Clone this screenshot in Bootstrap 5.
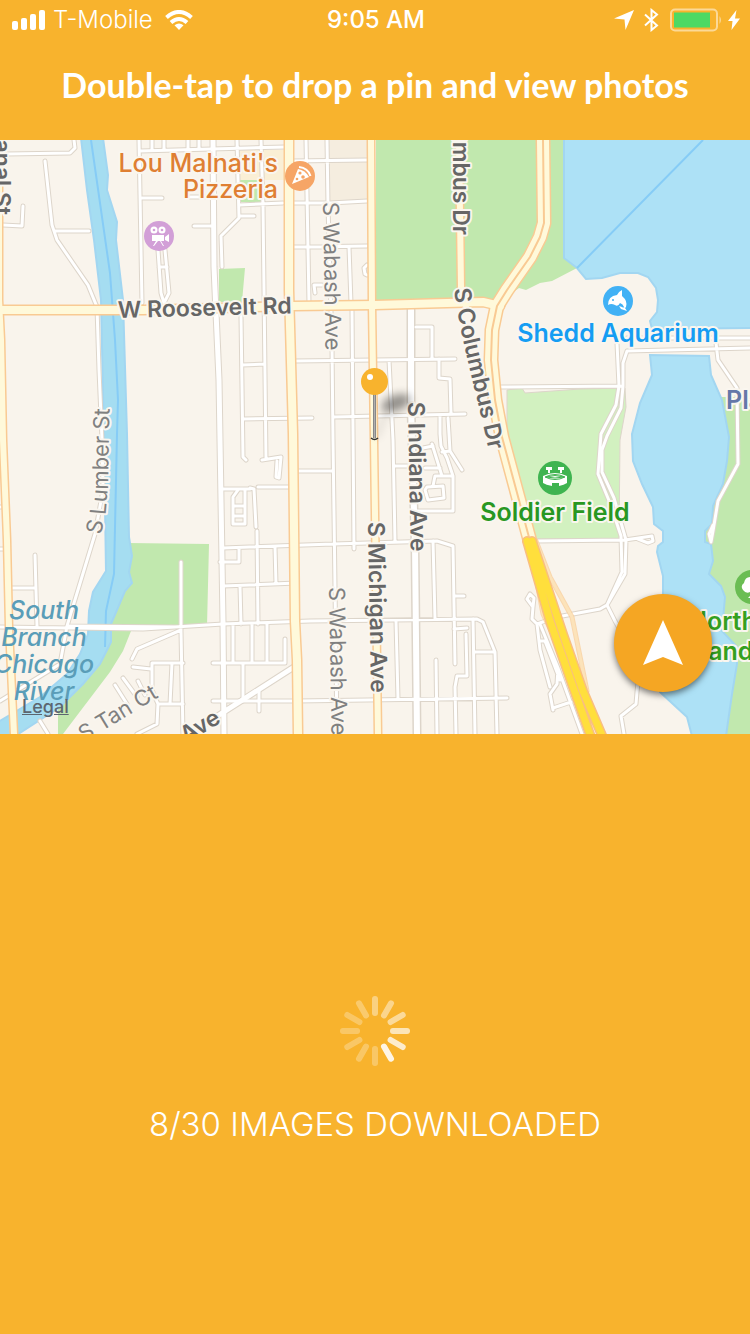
<!DOCTYPE html>
<html lang="en">
<head>
<meta charset="utf-8">
<meta name="viewport" content="width=device-width, initial-scale=1">
<title>Photo map</title>
<link rel="stylesheet" href="https://cdn.jsdelivr.net/npm/bootstrap@5.3.0/dist/css/bootstrap.min.css">
<script src="https://cdn.jsdelivr.net/npm/bootstrap@5.3.0/dist/js/bootstrap.bundle.min.js"></script>
<style>
  body { background: #f8b32d; color: #fff; font-family: Inter, "Liberation Sans", sans-serif; }
  .status-bar { height: 40px; padding: 0 10px 0 12px; font-size: 24px; line-height: 40px; }
  .status-side { flex: 1 1 0; }
  .carrier { font-weight: 300; margin-left: 8px; margin-right: 12px; }
  .clock { font-weight: 500; }
  .hint { height: 100px; padding-bottom: 10px; font: 700 34px/40px Lato, sans-serif; }
  .map-canvas { display: block; width: 100%; height: auto; background: #f9f4ec; }
  .locate { right: 38px; bottom: 42px; width: 98px; height: 98px; background: #f5a623; box-shadow: 0 3px 6px rgba(0,0,0,.5); }
  .legal { left: 22px; bottom: 16px; font-size: 18px; line-height: 22px; font-weight: 500; color: #5c6670; }
  .progress-pane { padding-top: 262px; }
  .progress-text { margin-top: 36px; font-size: 33px; line-height: 44px; font-weight: 300; }

  .casing, .paving { fill: none; stroke-linecap: round; stroke-linejoin: round; }
  .casing { stroke: #ddd5ca; }
  .paving { stroke: #fff; }
  .main.casing { stroke: #f9ca93; }
  .main.paving { stroke: #fff9da; }
  .express.casing { stroke: #f9bf80; }
  .express.paving { stroke: #ffdf3c; }
  .water { fill: #ade1f6; stroke: #a2d6f1; stroke-width: 2; }
  .channel { fill: none; stroke: #86ccf6; stroke-width: 2; }
  .park { fill: #c1e8ae; }
  .map-canvas text { font-family: Inter, "Liberation Sans", sans-serif; font-size: 25px; paint-order: stroke; stroke: #faf6ef; stroke-width: 4px; stroke-linejoin: round; }
  .map-canvas .avenue { fill: #666; font-size: 23px; font-weight: 600; }
  .map-canvas .street { fill: #808080; font-size: 22px; font-weight: 400; }
  .place { font-weight: 600; }
  .eatery { font-weight: 500; }
  .river-name { fill: #5a9db8; font-weight: 500; font-style: italic; }
  .map-canvas .river-name { stroke: none; }
</style>
</head>
<body class="d-flex flex-column min-vh-100">

<header>
  <div class="status-bar d-flex align-items-center">
    <div class="status-side d-flex align-items-center">
      <svg width="33" height="20" viewBox="0 0 33 20" fill="#fff" aria-hidden="true"><rect y="11" width="6" height="9" rx="2"/><rect x="9" y="8" width="6" height="12" rx="2"/><rect x="18" y="4" width="6" height="16" rx="2"/><rect x="27" width="6" height="20" rx="2"/></svg>
      <span class="carrier">T-Mobile</span>
      <svg width="28" height="20" viewBox="0 0 28 20" aria-hidden="true"><g fill="none" stroke="#fff" stroke-width="4"><path d="M1.500 7.500Q14-3.500 26.500 7.500"/><path d="M6 12.500Q14 5.500 22 12.500"/></g><path d="M14 20l-4.500-4.700q4.500-3.500 9 0z" fill="#fff"/></svg>
    </div>
    <span class="clock">9:05 AM</span>
    <div class="status-side d-flex align-items-center justify-content-end">
      <svg width="20" height="20" viewBox="0 0 20 20" fill="#fff" aria-hidden="true"><path d="M20 0L11.500 20 10.500 9.500 0 8.500z"/></svg>
      <svg class="ms-2 me-2" width="20" height="24" viewBox="0 0 20 24" fill="none" stroke="#fff" stroke-width="2" aria-hidden="true"><path d="M3 6.500L15 17.500 9.500 22V2L15 6.500 3 17.500"/></svg>
      <svg width="53" height="24" viewBox="0 0 53 24" aria-hidden="true"><rect x="1" y="1.500" width="46" height="21" rx="4" fill="none" stroke="#fff" stroke-opacity=".5" stroke-width="2"/><rect x="4" y="4.500" width="36" height="15" fill="#4cd964"/><path d="M49.500 8q3 4 0 8z" fill="#fff" fill-opacity=".5"/></svg>
      <svg class="ms-1" width="13" height="20" viewBox="0 0 13 20" fill="#fff" aria-hidden="true"><path d="M9.500 0L1 11h4.500L4.500 20 13 8.500H8z"/></svg>
    </div>
  </div>
  <h1 class="hint m-0 d-flex align-items-center justify-content-center text-center">Double-tap to drop a pin and view photos</h1>
</header>

<main class="flex-grow-1 d-flex flex-column">
  <section class="position-relative" aria-label="Map">
    <svg class="map-canvas" viewBox="0 140 750 594" role="img" aria-label="Street map of the South Loop, Chicago">
      <defs>
        <path id="minor" d="M7 154L70 153 75 148 74 140M45 161L52 225 57 240 88 285 97 307 99 370 102 440 103 490 95 534 67 626 60 664 0 701M54 231H89M3 225L22 226 23 206M139 140L142 303M140 151L285 147M152 140V150M164 140V150M188 140V149M199 140V149M237 140L239 218 221 236 222 267M142 198H162M194 226H213M190 197H213M239 205L283 203M240 216H254M158 250L161 293 164 303 169 293 165 250M159 267H167M241 316L243 457 246 460M242 365L265 364M243 419L312 418M261 140L263 205 266 459M262 460L281 457 279 478 276 477 277 461M306 140L309 303M327 140L328 205 332 347 333 440 335 587 337 734M293 161L367 160M293 203L330 203 367 201M293 247L367 246M349 247L351 303M352 310L354 549M367 265L364 268 365 274 367 275M315 293L314 285 322 285M295 361L455 359M333 417L465 414M389 360L393 440 395 541M416 327H432V358M439 359V378L450 379 451 413M440 415V434L441 446 447 458 453 476M448 418L449 434 450 451 462 470M442 452L450 451M298 471H332M258 487H290M250 488L254 489 256 527M257 531L258 624M223 548L333 544 437 541 453 546 455 664M395 466H408M425 468H440M423 448L433 446M432 444L442 476M433 541L435 619M275 547L276 584M223 586L297 583M0 627L143 629 223 624 310 621 477 619 483 622 495 652 497 734M70 626L181 627M473 619L475 734M475 652H493M396 621L398 699M213 701L297 701 507 698M454 629L467 628M466 634L467 676H457L455 687 456 734M436 660L437 734M454 596H464M417 511H453V476H435L433 486M427 487L443 486 444 498 428 500 425 490zM252 624V663M267 624V663M213 663H285V639M259 691V711M238 490L233 497V524H245V490M233 506H245M233 516H245M222 489H250M220 562H239V548M240 586L241 624M233 624V663M243 663V701M181 562V631L183 734M181 630L137 649 132 659M133 667L151 669M183 663H152V690L158 704H183M158 704L157 724 137 734M172 663L170 704M115 685L127 704M123 678L137 697M138 681L145 695M35 555L37 626M10 588H36M40 721L48 734M0 469H4M0 507H5M0 549H6M627 351L750 348M627 338H750M500 387L623 386M617 343L619 386 616 405 601 434 598 474 610 503 621 536 622 572 607 605M627 351L623 363 623 386 621 408 607 436 602 450 602 472 614 498 626 540 625 574 607 605M716 343L718 360 737 388 738 464 718 501 713 531 711 542 709 534 713 525M536 541L625 540 652 536 653 541 648 543 638 539M537 624L557 617 600 609 607 605 615 621 640 665 637 692 636 704 621 716 624 734M537 624L532 619 533 607 527 599 530 594 534 598 533 607M537 624L540 650 550 687M540 624L558 668 582 734M558 668L557 684 550 694 553 710M553 708L571 702M540 641H545L560 680"/>
        <path id="collector" d="M213 140L214 267 219 380 220 440 223 621 224 734M294 667L205 724"/>
        <path id="indiana" d="M411 310V407L415 544 417 734"/>
        <path id="arterial" d="M-1 140V300L1 340 3 440 7 540 9 627 14 734M371 140L372 305 374 440 378 734M459 140L461 287 466 306"/>
        <path id="arterial-wide" d="M0 310H143L293 306 375 305 483 302 500 306M289 140V290L293 434 295 621 297 660 298 734"/>
        <path id="shore-drive" d="M543 140L544 223 540 237 530 257 507 290 497 306 492 330 491 360 495 400 502 437 530 541"/>
        <path id="highway" d="M527 541L550 621 572 684 592 740M532 541L563 634 583 691 604 740"/>
        <path id="ramps" d="M530 545L543 614 567 664 575 690M536 541L550 577 572 617 587 691"/>
        <path id="columbus-line" d="M454 289L457 310 463 340 474 387 482 420 493 470"/>
        <path id="lumber-line" d="M101 535L106 510 108 487 109 434 110 390"/>
        <filter id="soft" x="-50%" y="-50%" width="200%" height="200%"><feGaussianBlur stdDeviation="4"/></filter>
      </defs>

      <!-- land use -->
      <path fill="#f5eddf" d="M329 140H368V201H329z"/>
      <path fill="#faefd5" d="M237 150H286V180H237z"/>
      <path class="park" d="M240 180H262V202H240zM219 269L245 268 242 302H219zM376 140H564V258L577 268 552 281 540 283 526 290 519 288 498 303 376 301zM128 543L209 544 207 626H133L123 651 110 672 63 734H58V700L100 630zM720 397H750V734H715L705 520z"/>
      <path fill="#d2f1c0" stroke="#ddd5ca" d="M507 390L522 388 525 393 580 389 625 388 626 407 620 440 619 539H535L507 434z"/>

      <!-- water -->
      <path class="water" d="M564 138V258L577 268 586 279 602 278 620 273H638L648 277 656 288 658 300 657 312 650 321 652 329 752 328V138z"/>
      <path class="water" d="M650 355L709 356 711 375 722 400 729 437 727 461 723 484 713 506 712 524 705 531V542L711 544 713 561 709 574 721 586 725 597 722 631 737 647V664L732 694 726 736H692L687 717 660 692 663 647V576L657 552 658 546 663 542V531L654 524 653 507 642 484 633 461 632 434 640 403 652 375z"/>
      <path class="water" style="fill:#a5ddf1" d="M81 138L87 190 94 240 101 300 104 440 106 571 93 592 89 611 88 634 80 654 67 674 40 697-2 722V738H12L60 707 83 684 100 664 111 642V624L125 591 132 583 129 572 132 556 129 537 127 434 123 300 116 240 117 222 107 190 108 175 103 138z"/>
      <path class="channel" d="M91 140L110 273 115 340 118 400 117 434 114 574 106 611 105 647M703 140L577 268"/>

      <!-- streets: casings first, then surfaces -->
      <use href="#minor" class="casing" stroke-width="5"/>
      <use href="#collector" class="casing" stroke-width="7"/>
      <use href="#indiana" class="casing" stroke-width="9"/>
      <use href="#minor" class="paving" stroke-width="3"/>
      <use href="#collector" class="paving" stroke-width="5"/>
      <use href="#indiana" class="paving" stroke-width="6"/>
      <use href="#ramps" class="main casing" stroke-width="5" opacity=".7"/>
      <use href="#ramps" class="paving" style="stroke:#fce3ba" stroke-width="3"/>
      <use href="#arterial" class="main casing" stroke-width="9"/>
      <use href="#arterial-wide" class="main casing" stroke-width="11"/>
      <use href="#shore-drive" class="main casing" stroke-width="15"/>
      <use href="#arterial" class="main paving" stroke-width="6"/>
      <use href="#arterial-wide" class="main paving" stroke-width="8"/>
      <use href="#shore-drive" class="main paving" stroke-width="12"/>
      <use href="#shore-drive" class="main casing" stroke-width="2"/>
      <use href="#highway" class="express casing" stroke-width="10"/>
      <use href="#highway" class="express paving" stroke-width="7"/>

      <!-- street names -->
      <text class="avenue" text-anchor="end" transform="translate(-6 215) rotate(90)">Canal St</text>
      <text class="avenue" transform="translate(118 318) rotate(-1.500)">W Roosevelt Rd</text>
      <text class="street" transform="translate(323 202) rotate(89)">S Wabash Ave</text>
      <text class="street" transform="translate(329 587) rotate(89)">S Wabash Ave</text>
      <text class="avenue" transform="translate(368 522) rotate(89)">S Michigan Ave</text>
      <text class="avenue" transform="translate(408 402) rotate(89)">S Indiana Ave</text>
      <text class="avenue" text-anchor="end" transform="translate(453 235) rotate(90)">S Columbus Dr</text>
      <text class="avenue"><textPath href="#columbus-line">S Columbus Dr</textPath></text>
      <text class="street"><textPath href="#lumber-line">S Lumber St</textPath></text>
      <text class="street" transform="translate(84 742) rotate(-31)">S Tan Ct</text>
      <text class="avenue" text-anchor="end" transform="translate(222 722) rotate(-31)">Ave</text>

      <!-- place names -->
      <text class="eatery" fill="#df7f33" text-anchor="end"><tspan x="278" y="172">Lou Malnati's</tspan><tspan x="278" y="198">Pizzeria</tspan></text>
      <text class="place" fill="#159df3" text-anchor="middle" x="618" y="342">Shedd Aquarium</text>
      <text class="place" fill="#289722" text-anchor="middle" x="555" y="521">Soldier Field</text>
      <text class="place" fill="#6577a8" x="726" y="409">Pla</text>
      <text class="place" fill="#35a01f"><tspan x="688" y="630">North</tspan><tspan x="681" y="660">Island</tspan></text>
      <text class="river-name" text-anchor="middle"><tspan x="44" y="619">South</tspan><tspan x="44" y="646">Branch</tspan><tspan x="44" y="673">Chicago</tspan><tspan x="44" y="700">River</tspan></text>

      <!-- cinema -->
      <g transform="translate(159 236)"><circle r="15" fill="#d29fd7"/><g fill="#fff"><circle cx="-5" cy="-6" r="3.500"/><circle cx="3" cy="-6" r="3.500"/><path d="M-7-1H5V5H-7zM6 1L10-2V6L6 4zM-3 5H-1L-5 10H-6zM1 5H2L5 10H4z"/></g><g fill="#d29fd7"><circle cx="-5" cy="-6" r="1.300"/><circle cx="3" cy="-6" r="1.300"/></g></g>
      <!-- pizzeria -->
      <g transform="translate(300 176)"><circle r="15" fill="#f6a566"/><path d="M-2-7Q5-6 9 1L-8 8z" fill="#fff"/><path d="M-1-9Q8-8 10.500 0" fill="none" stroke="#fff" stroke-width="2"/><g fill="#f6a566"><circle cx="0" cy="-3" r="1.600"/><circle cx="3" cy="1" r="1.800"/><circle cx="-3" cy="3" r="1.300"/></g></g>
      <!-- aquarium -->
      <g transform="translate(618 301)"><circle r="15" fill="#41b1f5"/><path d="M-10 4Q-10-5-1-6Q0-9 4-11L4-5Q10 0 8 6Q8 7 6 6Q5 3 2 2Q0 6-3 4Q-7 2-10 4z" fill="#fff"/><path d="M8 3Q7 8 4 6L1 5 3 8 9 10 7 7z" fill="#fff"/><circle cx="-5" cy="-1" r="1" fill="#41b1f5"/></g>
      <!-- stadium -->
      <g transform="translate(555 478)"><circle r="17" fill="#3fb450"/><path d="M-12-2Q0-8 12-2V5Q9 7 4 8V5H-3V8Q-9 7-12 5z" fill="#fff"/><path d="M-10-1Q0-6 10-1Q0 4-10-1zM-9-1Q0-4 9-1M-9-1Q0 1 9-1" fill="none" stroke="#3fb450"/><path d="M-9-11H-3V-8H-5V-5H-7V-8H-9zM3-11H9V-8H7V-5H5V-8H3z" fill="#fff"/></g>
      <!-- nature park -->
      <g transform="translate(752 587)"><circle r="17" fill="#6abd53"/><path d="M-9 3Q-12-1-8-4Q-7-10-2-10Q4-12 8-5V4Q3 5 1 3L0 9 4 11H-4L-2 9 -2 5Q-6 7-9 3z" fill="#fff"/></g>

      <!-- dropped pin -->
      <ellipse cx="396" cy="403" rx="15" ry="8" fill="#000" opacity=".4" filter="url(#soft)" transform="rotate(-20 396 403)"/>
      <path d="M376 438L388 408" stroke="#000" stroke-width="4" opacity=".12" filter="url(#soft)"/>
      <path d="M374.500 392V438" stroke="#888" stroke-width="3"/><path d="M374.500 392V438" stroke="#b0b0b0" stroke-width="1"/>
      <path d="M371 438Q374.500 441 378 438" fill="none" stroke="#333" stroke-width="1.500"/>
      <circle cx="374.500" cy="381.500" r="13.500" fill="#f8b32d"/><circle cx="370" cy="377" r="3" fill="#fff"/>
    </svg>
    <a class="legal position-absolute" href="#legal">Legal</a>
    <button type="button" class="locate btn border-0 rounded-circle p-0 position-absolute d-flex align-items-center justify-content-center" aria-label="Centre on my location">
      <svg width="40" height="46" viewBox="0 0 40 46" fill="#fff" aria-hidden="true"><path d="M20 0L40 45 20 37 0 45z"/></svg>
    </button>
  </section>

  <section class="progress-pane d-flex flex-column align-items-center text-center" role="status">
    <svg width="70" height="70" viewBox="-35 -35 70 70" stroke="#fff" stroke-width="6" stroke-linecap="round" aria-hidden="true">
      <path d="M0-18V-32" opacity=".4"/>
      <path d="M0-18V-32" opacity=".45" transform="rotate(30)"/>
      <path d="M0-18V-32" opacity=".52" transform="rotate(60)"/>
      <path d="M0-18V-32" opacity=".66" transform="rotate(90)"/>
      <path d="M0-18V-32" opacity=".76" transform="rotate(120)"/>
      <path d="M0-18V-32" opacity=".88" transform="rotate(150)"/>
      <path d="M0-18V-32" opacity=".27" transform="rotate(180)"/>
      <path d="M0-18V-32" opacity=".27" transform="rotate(210)"/>
      <path d="M0-18V-32" opacity=".27" transform="rotate(240)"/>
      <path d="M0-18V-32" opacity=".27" transform="rotate(270)"/>
      <path d="M0-18V-32" opacity=".27" transform="rotate(300)"/>
      <path d="M0-18V-32" opacity=".3" transform="rotate(330)"/>
    </svg>
    <p class="progress-text mb-0">8/30 IMAGES DOWNLOADED</p>
  </section>
</main>
</body>
</html>
